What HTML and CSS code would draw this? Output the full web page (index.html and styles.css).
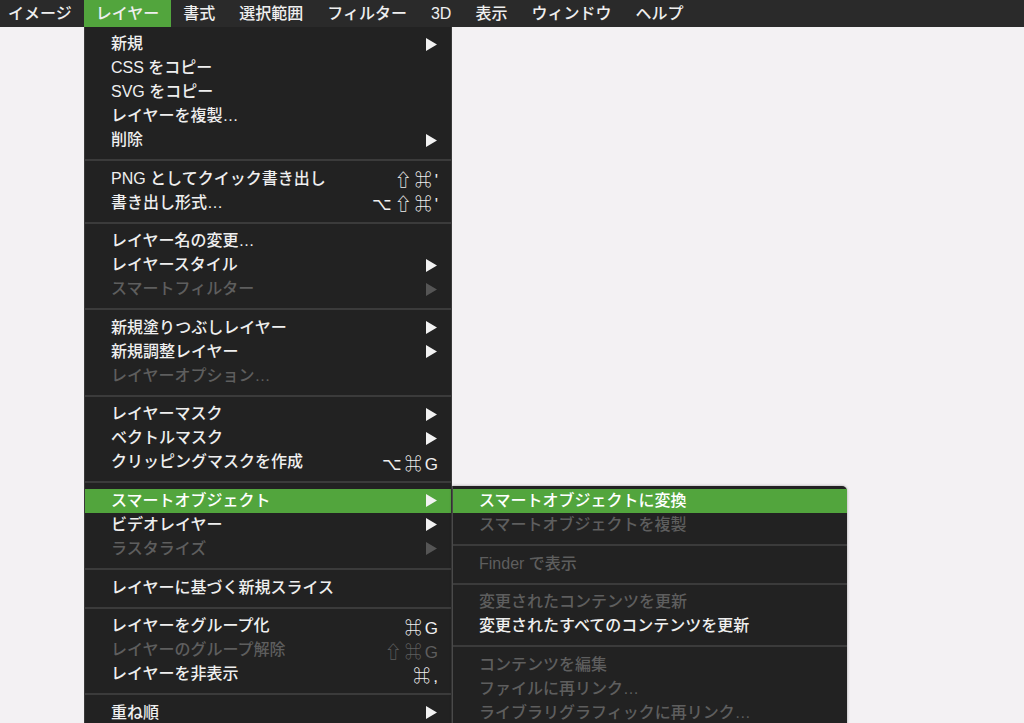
FILE: index.html
```html
<!DOCTYPE html>
<html lang="ja">
<head>
<meta charset="utf-8">
<title>レイヤー</title>
<link rel="stylesheet" href="styles.css">
</head>
<body>
<div class="screen">
  <nav class="menubar">
    <div class="mb-item first">イメージ</div>
    <div class="mb-item active">レイヤー</div>
    <div class="mb-item">書式</div>
    <div class="mb-item">選択範囲</div>
    <div class="mb-item">フィルター</div>
    <div class="mb-item">3D</div>
    <div class="mb-item">表示</div>
    <div class="mb-item">ウィンドウ</div>
    <div class="mb-item">ヘルプ</div>
  </nav>

  <div class="menu main-menu">
    <div class="row"><span class="label">新規</span><svg class="arrow" viewBox="0 0 11 13"><polygon points="0,0 11,6.5 0,13"/></svg></div>
    <div class="row"><span class="label">CSS をコピー</span></div>
    <div class="row"><span class="label">SVG をコピー</span></div>
    <div class="row"><span class="label">レイヤーを複製…</span></div>
    <div class="row"><span class="label">削除</span><svg class="arrow" viewBox="0 0 11 13"><polygon points="0,0 11,6.5 0,13"/></svg></div>
    <div class="sep"></div>
    <div class="row"><span class="label">PNG としてクイック書き出し</span><span class="key">⇧⌘'</span></div>
    <div class="row"><span class="label">書き出し形式…</span><span class="key">⌥⇧⌘'</span></div>
    <div class="sep"></div>
    <div class="row"><span class="label">レイヤー名の変更…</span></div>
    <div class="row"><span class="label">レイヤースタイル</span><svg class="arrow" viewBox="0 0 11 13"><polygon points="0,0 11,6.5 0,13"/></svg></div>
    <div class="row disabled"><span class="label">スマートフィルター</span><svg class="arrow" viewBox="0 0 11 13"><polygon points="0,0 11,6.5 0,13"/></svg></div>
    <div class="sep"></div>
    <div class="row"><span class="label">新規塗りつぶしレイヤー</span><svg class="arrow" viewBox="0 0 11 13"><polygon points="0,0 11,6.5 0,13"/></svg></div>
    <div class="row"><span class="label">新規調整レイヤー</span><svg class="arrow" viewBox="0 0 11 13"><polygon points="0,0 11,6.5 0,13"/></svg></div>
    <div class="row disabled"><span class="label">レイヤーオプション…</span></div>
    <div class="sep"></div>
    <div class="row"><span class="label">レイヤーマスク</span><svg class="arrow" viewBox="0 0 11 13"><polygon points="0,0 11,6.5 0,13"/></svg></div>
    <div class="row"><span class="label">ベクトルマスク</span><svg class="arrow" viewBox="0 0 11 13"><polygon points="0,0 11,6.5 0,13"/></svg></div>
    <div class="row"><span class="label">クリッピングマスクを作成</span><span class="key">⌥⌘G</span></div>
    <div class="sep"></div>
    <div class="row active"><span class="label">スマートオブジェクト</span><svg class="arrow" viewBox="0 0 11 13"><polygon points="0,0 11,6.5 0,13"/></svg></div>
    <div class="row"><span class="label">ビデオレイヤー</span><svg class="arrow" viewBox="0 0 11 13"><polygon points="0,0 11,6.5 0,13"/></svg></div>
    <div class="row disabled"><span class="label">ラスタライズ</span><svg class="arrow" viewBox="0 0 11 13"><polygon points="0,0 11,6.5 0,13"/></svg></div>
    <div class="sep"></div>
    <div class="row"><span class="label">レイヤーに基づく新規スライス</span></div>
    <div class="sep"></div>
    <div class="row"><span class="label">レイヤーをグループ化</span><span class="key">⌘G</span></div>
    <div class="row disabled"><span class="label">レイヤーのグループ解除</span><span class="key">⇧⌘G</span></div>
    <div class="row"><span class="label">レイヤーを非表示</span><span class="key">⌘,</span></div>
    <div class="sep"></div>
    <div class="row"><span class="label">重ね順</span><svg class="arrow" viewBox="0 0 11 13"><polygon points="0,0 11,6.5 0,13"/></svg></div>
  </div>

  <div class="menu sub-menu">
    <div class="row active"><span class="label">スマートオブジェクトに変換</span></div>
    <div class="row disabled"><span class="label">スマートオブジェクトを複製</span></div>
    <div class="sep"></div>
    <div class="row disabled"><span class="label">Finder で表示</span></div>
    <div class="sep"></div>
    <div class="row disabled"><span class="label">変更されたコンテンツを更新</span></div>
    <div class="row"><span class="label">変更されたすべてのコンテンツを更新</span></div>
    <div class="sep"></div>
    <div class="row disabled"><span class="label">コンテンツを編集</span></div>
    <div class="row disabled"><span class="label">ファイルに再リンク…</span></div>
    <div class="row disabled"><span class="label">ライブラリグラフィックに再リンク…</span></div>
  </div>
</div>
</body>
</html>
```

FILE: styles.css
```css
html, body {
  margin: 0;
  padding: 0;
}

body {
  background: #f3f1f3;
  font-family: "Liberation Sans", "Noto Sans CJK JP", "DejaVu Sans", sans-serif;
  font-size: 16px;
  font-weight: 500;
  color: #efefef;
  overflow: hidden;
}

.screen {
  position: relative;
  width: 1024px;
  height: 723px;
  overflow: hidden;
}

.menubar {
  display: flex;
  height: 27px;
  background: #2a2a2a;
}

.mb-item {
  padding: 0 12px;
  line-height: 27px;
  white-space: nowrap;
}

.mb-item.first {
  padding-left: 8px;
}

.mb-item.active {
  background: #52a53d;
}

.menu {
  position: absolute;
  box-sizing: border-box;
  background: #222222;
  display: flex;
  flex-direction: column;
}

.main-menu {
  left: 84px;
  top: 27px;
  width: 368px;
  height: 720px;
  padding-top: 5px;
  border-left: 1px solid #3a3a3a;
  border-right: 1px solid #3a3a3a;
}

.sub-menu {
  left: 452px;
  top: 486px;
  width: 395px;
  height: 260px;
  padding-top: 3px;
  border-left: 1px solid #4a4a4a;
  border-top-right-radius: 5px;
  box-shadow: 0 0 3px rgba(0, 0, 0, 0.35);
}

.row {
  display: flex;
  align-items: center;
  flex: none;
  height: 24px;
  padding: 0 14px 0 26px;
  white-space: nowrap;
}

.row .label {
  flex: 1;
  line-height: 24px;
}

.row.active {
  background: #52a53d;
  color: #ffffff;
}

.row.disabled {
  color: #5e5e5e;
}

.arrow {
  width: 11px;
  height: 13px;
  fill: #f2f2f2;
}

.row.disabled .arrow {
  fill: #555555;
}

.key {
  margin-right: -4px;
  letter-spacing: 3px;
  font-size: 17px;
}

.sep {
  height: 2px;
  margin: 7px 0 5.6px;
  background: #3b3b3b;
  flex: none;
}
```
